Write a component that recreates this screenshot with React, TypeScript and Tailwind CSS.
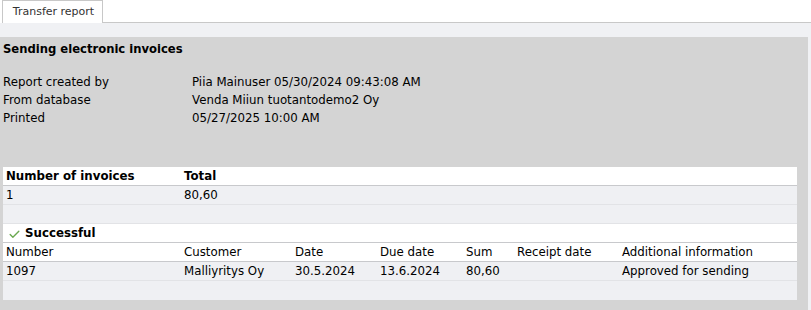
import { Check } from "lucide-react";

const font = { fontFamily: '"DejaVu Sans", Verdana, sans-serif' };

const meta = [
  ["Report created by", "Piia Mainuser 05/30/2024 09:43:08 AM"],
  ["From database", "Venda Miiun tuotantodemo2 Oy"],
  ["Printed", "05/27/2025 10:00 AM"],
];

const cols = ["w-[178px]", "w-[111px]", "w-[85px]", "w-[86px]", "w-[51px]", "w-[105px]", "flex-1"];
const headers = ["Number", "Customer", "Date", "Due date", "Sum", "Receipt date", "Additional information"];
const row = ["1097", "Malliyritys Oy", "30.5.2024", "13.6.2024", "80,60", "", "Approved for sending"];

const Row = ({ cells, className }: { cells: string[]; className: string }) => (
  <div className={`flex h-[19px] items-center border-b border-[#c8c9cc] pl-[3px] pt-[2px] ${className}`}>
    {cells.map((c, i) => (
      <div key={i} className={`${cols[i]} shrink-0 whitespace-nowrap`}>
        {c}
      </div>
    ))}
  </div>
);

export default function App() {
  return (
    <div className="w-[811px] h-[310px] overflow-hidden bg-white text-[11.8px] text-black" style={font}>
      <div className="flex h-[23px] items-end">
        <div className="ml-[2px] flex h-[23px] w-[101px] items-center justify-center border border-b-0 border-[#c8c8c8] bg-white pl-[2px] text-[11px] text-[#333]">
          Transfer report
        </div>
        <div className="flex-1 border-b border-[#c8c8c8]" />
      </div>
      <div className="flex">
        <div className="flex-1">
          <div className="h-[14px] bg-[#f0f1f4]" />
          <div className="h-[273px] bg-[#d4d4d4] pt-[3px]">
            <div className="pl-[3px] text-[11.6px] font-bold leading-[18px]">Sending electronic invoices</div>
            <div className="mt-[16px] flex flex-col pl-[3px]">
              {meta.map(([k, v]) => (
                <div key={k} className="flex h-[18px] items-center">
                  <div className="w-[189px]">{k}</div>
                  <div>{v}</div>
                </div>
              ))}
            </div>
            <div className="mx-[3px] mt-[39px] w-[794px] bg-[#eff0f3]">
              <div className="flex h-[19px] items-center border-b border-[#c8c9cc] bg-white pl-[3px] pt-[2px] font-bold">
                <div className="w-[178px]">Number of invoices</div>
                <div>Total</div>
              </div>
              <div className="flex h-[19px] items-center border-b border-[#e2e3e6] pl-[3px] pt-[2px]">
                <div className="w-[178px]">1</div>
                <div>80,60</div>
              </div>
              <div className="h-[19px] border-b border-[#e2e3e6]" />
              <div className="flex h-[19px] items-center gap-[4px] border-b border-[#c8c9cc] bg-white pl-[5px] pt-[2px] font-bold">
                <Check size={13} strokeWidth={2.5} className="text-[#6aa84f]" />
                <span>Successful</span>
              </div>
              <Row cells={headers} className="bg-white" />
              <Row cells={row} className="border-[#e2e3e6]" />
              <div className="h-[19px]" />
            </div>
          </div>
        </div>
        <div className="w-[3px] bg-[#f0f1f4]" />
      </div>
    </div>
  );
}
